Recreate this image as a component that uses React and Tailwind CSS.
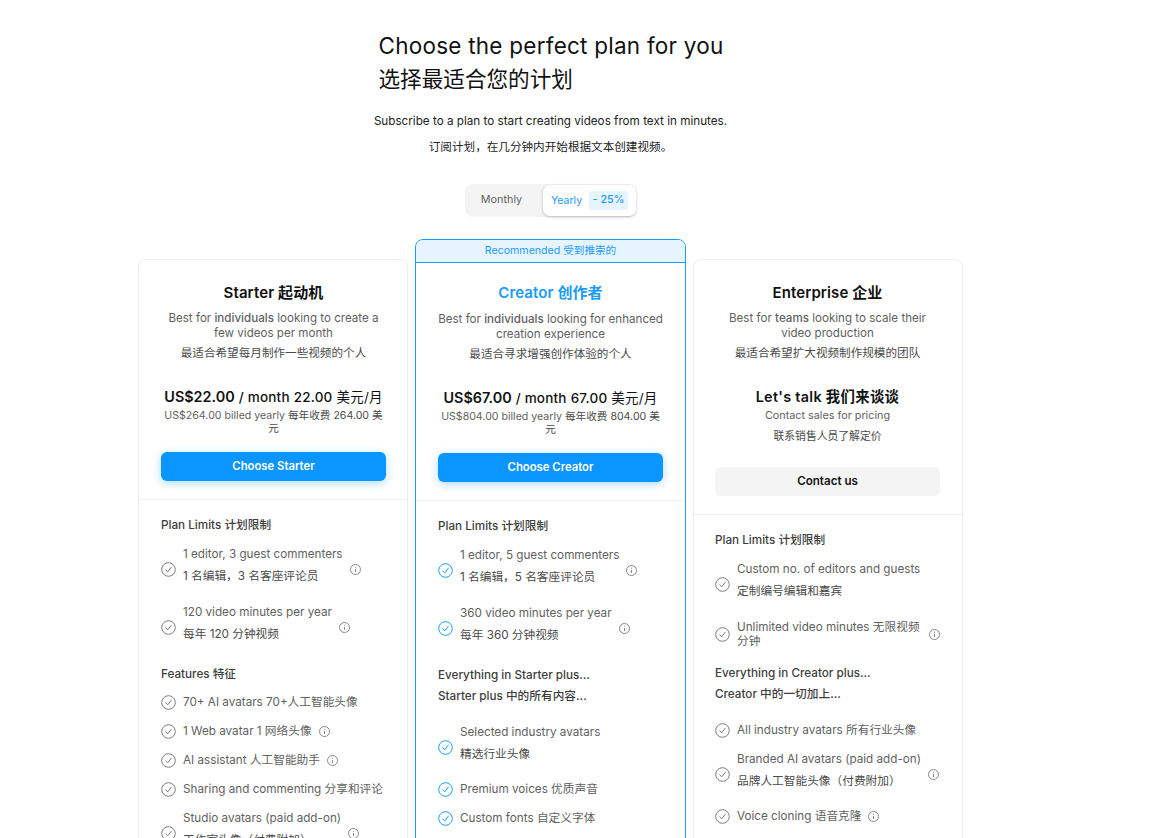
import React from "react";

const FONT = "font-['Inter','Noto_Sans_CJK_SC',sans-serif]";

function Check({ blue }) {
  return (
    <svg
      width="15"
      height="15"
      viewBox="0 0 15 15"
      fill="none"
      stroke={blue ? "#1a9bff" : "#7d7d7d"}
      strokeWidth="1"
      className="shrink-0"
    >
      <circle cx="7.5" cy="7.5" r="6.8" />
      <path d="M4.8 7.8l1.9 2 3.6-4.6" strokeLinecap="round" strokeLinejoin="round" />
    </svg>
  );
}

function Info() {
  return (
    <svg
      width="11"
      height="11"
      viewBox="0 0 11 11"
      fill="none"
      stroke="#7d7d7d"
      strokeWidth="0.9"
      className="shrink-0"
    >
      <circle cx="5.5" cy="5.5" r="5" />
      <path d="M5.5 5v3M5.5 2.8v.9" />
    </svg>
  );
}

// two line feature, the icons sit a bit under the middle of the text
function Item({ blue, en, zh, info, className = "" }) {
  return (
    <li className={`flex items-center ${className}`}>
      <span className="mt-[7px]">
        <Check blue={blue} />
      </span>
      <div className="ml-[7px] text-[11.7px] leading-[15px] text-[#616161] whitespace-nowrap">
        <p>{en}</p>
        <p className="mt-[7px] text-[#4a4a4a]">{zh}</p>
      </div>
      {info && (
        <span className="ml-[7px] mt-[7px]">
          <Info />
        </span>
      )}
    </li>
  );
}

function Row({ blue, children, info, className = "" }) {
  return (
    <li className={`flex items-center h-[15px] ${className}`}>
      <Check blue={blue} />
      <span className="ml-[7px] text-[11.7px] leading-[15px] text-[#616161] whitespace-nowrap">{children}</span>
      {info && (
        <span className="ml-[7px]">
          <Info />
        </span>
      )}
    </li>
  );
}

function Heading({ children, className = "" }) {
  return <h4 className={`text-[11.7px] leading-[15px] font-medium text-[#3d3d3d] ${className}`}>{children}</h4>;
}

function Desc({ who, line1, line2, zh }) {
  return (
    <div className="mt-[9px] text-center text-[11.6px] leading-[15px] text-[#616161] whitespace-nowrap">
      <p>
        Best for <span className="font-medium">{who}</span> {line1}
        <br />
        {line2}
      </p>
      <p className="mt-[5px] text-[#4a4a4a]">{zh}</p>
    </div>
  );
}

function Price({ en, month, sub, amount }) {
  return (
    <div className="mt-[24px] text-center">
      <p className="text-[13.5px] leading-[23px] tracking-[0.2px] text-[#111] whitespace-nowrap">
        <span className="text-[14.4px] font-semibold tracking-normal">{en}</span>{" "}
        <span className="font-medium">/ month</span> <span className="font-medium">{month}</span> 美元/月
      </p>
      <p className="text-[10.6px] leading-[13px] text-[#616161]">
        {sub} billed yearly <span className="text-[#4a4a4a]">每年收费 {amount} 美元</span>
      </p>
    </div>
  );
}

function PrimaryButton({ children }) {
  return (
    <button className="mt-[17px] w-full h-[29px] rounded-[6px] bg-[#0a95ff] text-white text-[11.3px] font-semibold shadow-[0_2px_8px_rgba(10,149,255,0.35)]">
      {children}
    </button>
  );
}

export default function App() {
  return (
    <div className={`${FONT} h-[838px] overflow-hidden bg-white pr-[48px] text-[#111]`}>
      <div className="flex flex-col items-center">
        <h1 className="mt-[29px] w-[344px] text-[22.5px] leading-[33px] font-normal tracking-[0.24px] text-[#111] whitespace-nowrap">
          Choose the perfect plan for you
          <br />
          <span className="text-[21.6px] tracking-normal">选择最适合您的计划</span>
        </h1>
        <p className="mt-[17px] text-[11.7px] leading-[16px] text-[#222]">
          Subscribe to a plan to start creating videos from text in minutes.
        </p>
        <p className="mt-[10px] text-[11.6px] leading-[16px] text-[#222]">订阅计划，在几分钟内开始根据文本创建视频。</p>

        <div className="mt-[29px] flex h-[33px] w-[171px] items-center rounded-[8px] bg-[#f4f4f4]">
          <span className="w-[78px] pr-[5px] text-center text-[10.8px] text-[#616161]">Monthly</span>
          <div className="flex h-[31px] w-[93px] items-center rounded-[7px] bg-white pl-2 shadow-[0_1px_3px_rgba(0,0,0,0.25)]">
            <span className="text-[10.5px] text-[#1a9bff]">Yearly</span>
            <span className="ml-[7px] w-[39px] rounded-[3px] bg-[#e6f4ff] py-px text-center text-[10.8px] font-medium text-[#1a9bff]">- 25%</span>
          </div>
        </div>

        <div className="mt-[22px] grid w-[825px] grid-cols-[270px_271px_270px] gap-x-[7px] items-start">
          <section className="mt-[20px] h-[640px] rounded-[8px] border border-[#eeeeee]">
            <div className="pl-[22px] pr-[21px] pt-[24px] pb-[18px] border-b border-[#f0f0f0]">
              <h3 className="text-center text-[15px] leading-[18px] tracking-[0.1px] font-semibold text-[#111]">Starter 起动机</h3>
              <Desc who="individuals" line1="looking to create a" line2="few videos per month" zh="最适合希望每月制作一些视频的个人" />
              <Price en="US$22.00" month="22.00" sub="US$264.00" amount="264.00" />
              <PrimaryButton>Choose Starter</PrimaryButton>
            </div>
            <div className="px-[22px] pt-[18px]">
              <Heading>Plan Limits 计划限制</Heading>
              <ul className="mt-[14px] flex flex-col gap-[21px]">
                <Item en="1 editor, 3 guest commenters" zh="1 名编辑，3 名客座评论员" info />
                <Item en="120 video minutes per year" zh="每年 120 分钟视频" info />
              </ul>
              <Heading className="mt-[25px]">Features 特征</Heading>
              <ul className="mt-[13px] flex flex-col gap-[14px]">
                <Row>70+ AI avatars 70+人工智能头像</Row>
                <Row info>1 Web avatar 1 网络头像</Row>
                <Row info>AI assistant 人工智能助手</Row>
                <Row>Sharing and commenting 分享和评论</Row>
                <Item en="Studio avatars (paid add-on)" zh="工作室头像（付费附加）" info />
              </ul>
            </div>
          </section>

          <section className="h-[660px] rounded-[8px] border border-[#1a9bff]">
            <div className="h-[23px] rounded-t-[7px] border-b border-[#1a9bff] bg-[#e6f4ff] text-center text-[10.6px] leading-[22px] text-[#1a9bff]">
              Recommended 受到推崇的
            </div>
            <div className="px-[22px] pt-[20px] pb-[18px] border-b border-[#f0f0f0]">
              <h3 className="text-center text-[15px] leading-[20px] tracking-[0.1px] font-semibold text-[#1a9bff]">Creator 创作者</h3>
              <Desc who="individuals" line1="looking for enhanced" line2="creation experience" zh="最适合寻求增强创作体验的个人" />
              <Price en="US$67.00" month="67.00" sub="US$804.00" amount="804.00" />
              <PrimaryButton>Choose Creator</PrimaryButton>
            </div>
            <div className="px-[22px] pt-[18px]">
              <Heading>Plan Limits 计划限制</Heading>
              <ul className="mt-[14px] flex flex-col gap-[21px]">
                <Item blue en="1 editor, 5 guest commenters" zh="1 名编辑，5 名客座评论员" info />
                <Item blue en="360 video minutes per year" zh="每年 360 分钟视频" info />
              </ul>
              <Heading className="mt-[25px]">Everything in Starter plus...</Heading>
              <Heading className="mt-[6px]">Starter plus 中的所有内容...</Heading>
              <ul className="mt-[21px] flex flex-col gap-[14px]">
                <Item blue className="mb-[6px]" en="Selected industry avatars" zh="精选行业头像" />
                <Row blue>Premium voices 优质声音</Row>
                <Row blue>Custom fonts 自定义字体</Row>
              </ul>
            </div>
          </section>

          <section className="mt-[20px] h-[640px] rounded-[8px] border border-[#eeeeee]">
            <div className="pl-[21px] pr-[22px] pt-[24px] pb-[18px] border-b border-[#f0f0f0]">
              <h3 className="text-center text-[15px] leading-[18px] tracking-[0.1px] font-semibold text-[#111]">Enterprise 企业</h3>
              <Desc who="teams" line1="looking to scale their" line2="video production" zh="最适合希望扩大视频制作规模的团队" />
              <div className="mt-[24px] text-center">
                <p className="text-[14.4px] leading-[24px] tracking-[0.3px] font-semibold text-[#111]">Let's talk 我们来谈谈</p>
                <p className="text-[10.8px] leading-[13px] text-[#616161]">Contact sales for pricing</p>
                <p className="mt-[8px] text-[10.8px] leading-[13px] text-[#4a4a4a]">联系销售人员了解定价</p>
              </div>
              <button className="mt-[24px] w-full h-[29px] rounded-[6px] bg-[#f4f4f4] text-[11.6px] font-semibold text-[#111]">
                Contact us
              </button>
            </div>
            <div className="pl-[21px] pr-[22px] pt-[18px]">
              <Heading>Plan Limits 计划限制</Heading>
              <ul className="mt-[14px]">
                <Item en="Custom no. of editors and guests" zh="定制编号编辑和嘉宾" />
              </ul>
              <div className="mt-[21px] flex items-center">
                <Check />
                <span className="ml-[7px] text-[11.7px] leading-[14px] text-[#616161] whitespace-nowrap">
                  Unlimited video minutes 无限视频
                  <br />
                  分钟
                </span>
                <span className="ml-[9px]">
                  <Info />
                </span>
              </div>
              <Heading className="mt-[18px]">Everything in Creator plus...</Heading>
              <Heading className="mt-[6px]">Creator 中的一切加上...</Heading>
              <ul className="mt-[21px] flex flex-col">
                <Row>All industry avatars 所有行业头像</Row>
                <Item className="mt-[14px]" en="Branded AI avatars (paid add-on)" zh="品牌人工智能头像（付费附加）" info />
                <Row className="mt-[20px]" info>Voice cloning 语音克隆</Row>
              </ul>
            </div>
          </section>
        </div>
      </div>
    </div>
  );
}
